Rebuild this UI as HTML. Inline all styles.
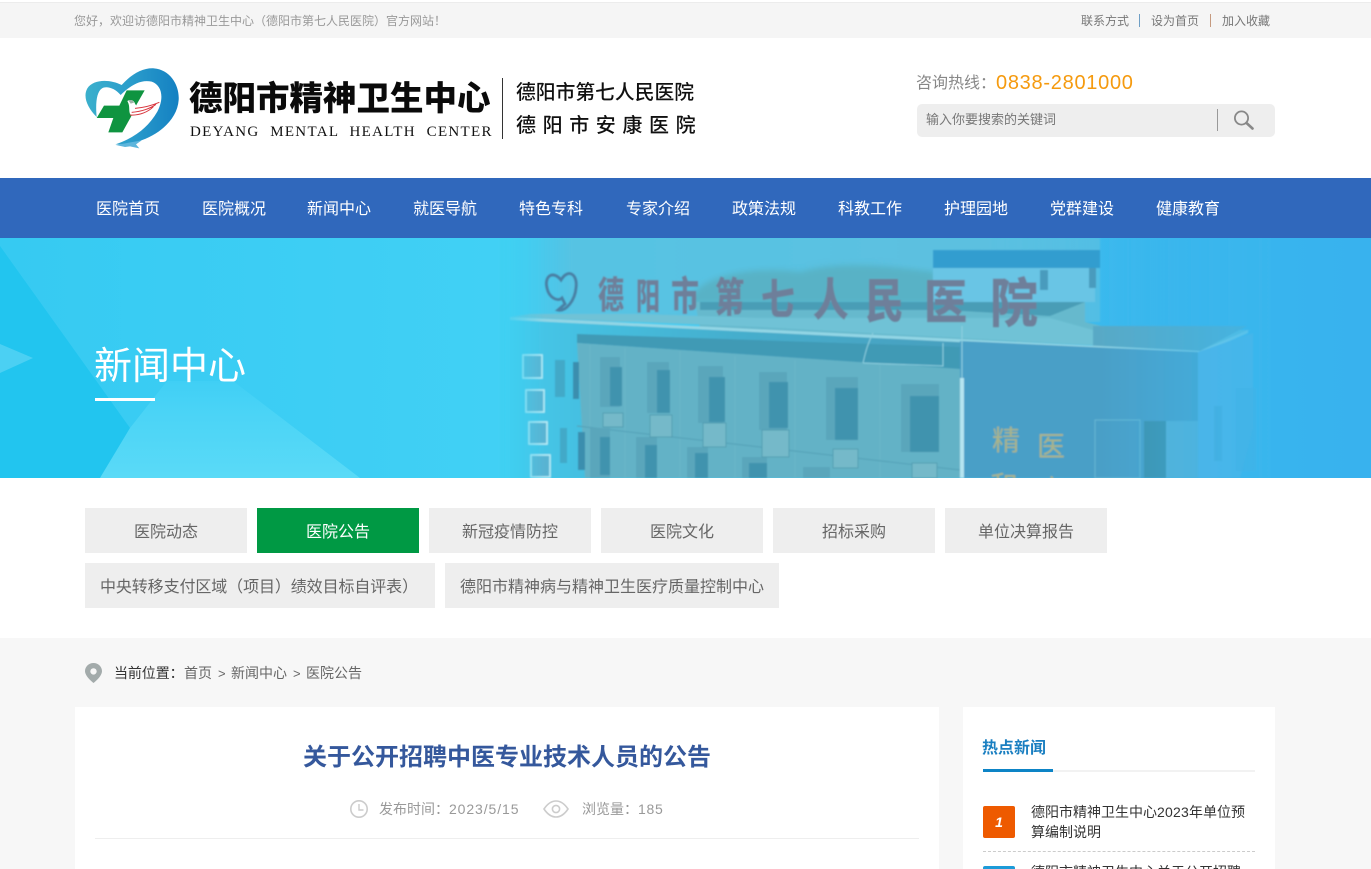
<!DOCTYPE html>
<html lang="zh-CN">
<head>
<meta charset="utf-8">
<title>关于公开招聘中医专业技术人员的公告</title>
<style>
*{margin:0;padding:0;box-sizing:border-box}
html,body{width:1371px;height:869px;overflow:hidden;background:#fff}
body{position:relative;font-family:"Liberation Sans","Noto Sans CJK SC",sans-serif;color:#333}
.a{position:absolute;white-space:nowrap}
.nav{top:180px;height:60px;line-height:60px;color:#fff;font-size:16px}
.tab{height:45px;line-height:49px;background:#eee;color:#666;font-size:16px;text-align:center}
</style>
</head>
<body>
<!-- top bar -->
<div class="a" style="left:0;top:2px;width:1371px;height:36px;background:#f5f5f5;border-top:1px solid #ececec"></div>
<div class="a" style="left:74px;top:12px;font-size:12px;line-height:18px;color:#999">您好，欢迎访德阳市精神卫生中心（德阳市第七人民医院）官方网站！</div>
<div class="a" style="left:1081px;top:12px;font-size:12px;line-height:18px;color:#777">联系方式</div>
<div class="a" style="left:1139px;top:14px;width:1px;height:13px;background:#6f9fc5"></div>
<div class="a" style="left:1151px;top:12px;font-size:12px;line-height:18px;color:#777">设为首页</div>
<div class="a" style="left:1210px;top:14px;width:1px;height:13px;background:#c59a7f"></div>
<div class="a" style="left:1222px;top:12px;font-size:12px;line-height:18px;color:#777">加入收藏</div>

<!-- logo -->
<svg class="a" style="left:80px;top:65px" width="100" height="85" viewBox="0 0 300 255">
<defs><linearGradient id="h" x1="0" y1="0" x2="1" y2="0"><stop offset="0" stop-color="#3bb0cc"/><stop offset=".5" stop-color="#2a9ccb"/><stop offset="1" stop-color="#1480c2"/></linearGradient></defs>
<path fill="url(#h)" d="M50 156C22 128 8 95 22 70C40 42 90 42 125 60C155 26 190 8 222 10C270 14 299 60 296 105C292 162 240 209 175 229C150 236 125 239 106 238C156 222 204 190 232 140C252 102 248 62 215 50C182 42 150 62 122 90C104 68 78 62 66 70C50 80 46 114 50 156Z"/>
<path fill="#5db5dc" d="M108 240L185 226L168 238L178 250L150 244L135 246Z"/>
<path fill="#0f9440" d="M140 76H194L170 118L152 157L127 202H85L100 159H50L72 122H118Z"/>
<path fill="#fff" d="M142 108C150 102 162 105 165 116C170 126 178 128 190 130C180 146 164 154 152 150C144 138 152 125 142 108Z"/>
<path fill="#9fb3a8" d="M145 106C152 103 160 106 162 113L152 116Z"/>
<path fill="none" stroke="#d8343c" stroke-width="3" d="M165 130C190 128 215 122 238 112M155 142C185 140 212 130 228 118M150 150C180 152 205 140 220 125"/>
</svg>
<div class="a" style="left:189px;top:76px;font-size:33.5px;line-height:48px;font-weight:900;color:#0a0a0a">德阳市精神卫生中心</div>
<div class="a" style="left:190px;top:123px;font-family:'Liberation Serif',serif;font-size:15px;line-height:18px;color:#111;letter-spacing:1.3px;word-spacing:5.7px">DEYANG MENTAL HEALTH CENTER</div>
<div class="a" style="left:502px;top:78px;width:1px;height:61px;background:#333"></div>
<div class="a" style="left:516px;top:79px;font-size:19.8px;line-height:28px;font-weight:500;color:#111">德阳市第七人民医院</div>
<div class="a" style="left:516px;top:112px;font-size:20px;line-height:28px;font-weight:500;color:#111;letter-spacing:6.6px">德阳市安康医院</div>

<!-- hotline + search -->
<div class="a" style="left:916px;top:72px;font-size:16px;line-height:24px;color:#888">咨询热线：</div>
<div class="a" style="left:996px;top:69px;font-size:20px;line-height:28px;color:#f59a0e;letter-spacing:.72px">0838-2801000</div>
<div class="a" style="left:917px;top:104px;width:358px;height:33px;background:#eee;border-radius:5px"></div>
<div class="a" style="left:926px;top:110px;font-size:13px;line-height:19px;color:#777">输入你要搜索的关键词</div>
<div class="a" style="left:1217px;top:109px;width:1px;height:22px;background:#999"></div>
<svg class="a" style="left:1232px;top:109px" width="24" height="22" viewBox="0 0 24 22"><circle cx="9.5" cy="9" r="6.6" fill="none" stroke="#888" stroke-width="1.8"/><path d="M14.5 14L20.5 19.5" stroke="#888" stroke-width="2.6" stroke-linecap="round"/></svg>

<!-- nav -->
<div class="a" style="left:0;top:178px;width:1371px;height:60px;background:#3068bc"></div>
<div class="a nav" style="left:96px">医院首页</div>
<div class="a nav" style="left:202px">医院概况</div>
<div class="a nav" style="left:307px">新闻中心</div>
<div class="a nav" style="left:413px">就医导航</div>
<div class="a nav" style="left:519px">特色专科</div>
<div class="a nav" style="left:626px">专家介绍</div>
<div class="a nav" style="left:732px">政策法规</div>
<div class="a nav" style="left:838px">科教工作</div>
<div class="a nav" style="left:944px">护理园地</div>
<div class="a nav" style="left:1050px">党群建设</div>
<div class="a nav" style="left:1156px">健康教育</div>

<!-- banner -->
<svg class="a" style="left:0;top:238px" width="1371" height="240" viewBox="0 0 1371 240">
<defs>
<linearGradient id="bg" x1="0" y1="0" x2="1" y2="0"><stop offset="0" stop-color="#36caf2"/><stop offset=".36" stop-color="#41d0f5"/><stop offset=".62" stop-color="#42c6ef"/><stop offset=".85" stop-color="#39b6ed"/><stop offset="1" stop-color="#38b2ee"/></linearGradient>
<linearGradient id="lt" x1="0" y1="0" x2="0" y2="1"><stop offset="0" stop-color="#40cff5"/><stop offset=".35" stop-color="#4bd4f6"/><stop offset="1" stop-color="#5adaf7"/></linearGradient>
<linearGradient id="sky" x1="0" y1="0" x2="1" y2="0"><stop offset="0" stop-color="#44c6ea" stop-opacity="0"/><stop offset=".12" stop-color="#56c3e3"/><stop offset=".8" stop-color="#5cc0e0"/><stop offset="1" stop-color="#5cc0e0" stop-opacity=".7"/></linearGradient>
<linearGradient id="lf" x1="0" y1="0" x2="1" y2="0"><stop offset="0" stop-color="#43c8ea"/><stop offset=".5" stop-color="#45aecd"/><stop offset="1" stop-color="#479fbe"/></linearGradient>
<linearGradient id="fl" x1="0" y1="0" x2="1" y2="0"><stop offset="0" stop-color="#3fd0f2"/><stop offset="1" stop-color="#3fd0f2" stop-opacity="0"/></linearGradient>
<linearGradient id="fr" x1="0" y1="0" x2="1" y2="0"><stop offset="0" stop-color="#3ab7ed" stop-opacity="0"/><stop offset=".8" stop-color="#3ab7ed" stop-opacity=".9"/><stop offset="1" stop-color="#3ab7ed"/></linearGradient>
<filter id="b" x="-2%" y="-2%" width="104%" height="104%"><feGaussianBlur stdDeviation=".7"/></filter>
<filter id="b2" x="-5%" y="-20%" width="110%" height="140%"><feGaussianBlur stdDeviation="3"/></filter>
</defs>
<rect width="1371" height="240" fill="url(#bg)"/>
<path d="M0 8L130 190L100 240H0Z" fill="#22c5ef"/>
<path d="M0 106L33 120L0 135Z" fill="#4bd0f3"/>
<path d="M130 190L167 143H233L360 240H100Z" fill="url(#lt)"/>
<g filter="url(#b)">
<!-- sky & distant -->
<rect x="500" y="0" width="600" height="84" fill="url(#sky)"/>
<path d="M690 62C700 35 760 28 800 34C840 22 890 28 935 34V66H690Z" fill="#58b2c6" filter="url(#b2)"/>
<rect x="933" y="30" width="162" height="34" fill="#69c5e5"/>
<rect x="933" y="12" width="167" height="18" fill="#309dcf"/>
<rect x="1040" y="32" width="8" height="20" fill="#4a9bbd"/>
<rect x="1089" y="30" width="7" height="20" fill="#4a9bbd"/>
<!-- roof deck -->
<path d="M695 64H1085V84L1200 112L700 90Z" fill="#66b9cd"/>
<path d="M700 64H1085L1050 78L945 72H700Z" fill="#489db6"/>
<path d="M510 79L760 89L1200 113L1250 92H1093L1050 80H760L640 76L530 76Z" fill="#6fc2d6"/>
<path d="M1093 88H1247L1200 113L1093 108Z" fill="#58a9c6"/>
<!-- facades -->
<path d="M510 80L960 103V240H510Z" fill="url(#lf)"/>
<path d="M510 79L1200 113L1248 92V95L1200 116L510 82Z" fill="#93d6e5"/>
<path d="M577 96L960 109V131L577 105Z" fill="#3f9ab5"/>
<path d="M960 103L1198 114V240H960Z" fill="#4a9fc7"/>
<path d="M1198 114L1253 95V190L1240 240H1198Z" fill="#57b3e5"/>
<path d="M577 105L960 131V240H585Z" fill="#64b2c6"/>
<!-- tile lines -->
<g stroke="#7cc3d2" stroke-width=".5" opacity=".4"><path d="M590 107V240M625 110V240M680 113V240M735 118V240M795 122V240M880 126V240"/></g>
<path d="M577 188L960 232" stroke="#55a3b9" stroke-width="1.2" fill="none"/>
<!-- pipes -->
<rect x="960" y="140" width="4" height="100" fill="#b5e5f1"/>
<path d="M962 88V140M873 95C868 105 866 112 863 125M863 125L943 128V105" stroke="#8fd0e0" stroke-width="1" fill="none"/>
<!-- left dark strips -->
<g fill="#4397b6"><rect x="555" y="122" width="10" height="37" opacity=".6"/><rect x="573" y="124" width="6" height="37" fill="#3a8eae"/><rect x="560" y="190" width="7" height="35" opacity=".6"/><rect x="578" y="194" width="7" height="38" fill="#3a8eae"/></g>
<!-- framed windows -->
<g fill="#59b3d2" stroke="#b9edf7" stroke-width="1.6"><rect x="523" y="117" width="19" height="23"/><rect x="526" y="152" width="18" height="22"/><rect x="529" y="184" width="18" height="22"/><rect x="531" y="217" width="19" height="22"/></g>
<!-- window recesses -->
<g fill="#5aa6bb">
<rect x="600" y="119" width="20" height="50"/><rect x="647" y="124" width="22" height="51"/><rect x="698" y="128" width="25" height="57"/><rect x="759" y="134" width="28" height="58"/><rect x="826" y="139" width="32" height="63"/><rect x="901" y="146" width="38" height="68"/>
<rect x="590" y="190" width="20" height="50"/><rect x="636" y="199" width="21" height="41"/><rect x="687" y="209" width="21" height="31"/><rect x="742" y="219" width="25" height="21"/><rect x="803" y="229" width="27" height="11"/>
</g>
<!-- panes -->
<g fill="#3f93ae">
<rect x="610" y="129" width="12" height="39"/><rect x="657" y="132" width="13" height="43"/><rect x="709" y="139" width="16" height="45"/><rect x="769" y="144" width="19" height="46"/><rect x="835" y="150" width="23" height="52"/><rect x="910" y="158" width="29" height="56"/>
<rect x="600" y="199" width="10" height="38"/><rect x="645" y="207" width="12" height="33"/><rect x="695" y="215" width="13" height="25"/><rect x="749" y="225" width="18" height="15"/>
</g>
<!-- AC units -->
<g fill="#74b9c9" stroke="#4d99ad" stroke-width=".8"><rect x="603" y="175" width="20" height="14"/><rect x="650" y="177" width="22" height="22"/><rect x="703" y="185" width="23" height="24"/><rect x="762" y="192" width="27" height="27"/><rect x="833" y="211" width="25" height="19"/><rect x="912" y="225" width="25" height="15"/></g>
<!-- right side details -->
<rect x="1144" y="183" width="22" height="57" fill="#3f8fa9"/>
<path d="M1166 183H1198V240H1166Z" fill="#5bb0d4"/>
<path d="M1095 182H1140V240H1095Z" fill="none" stroke="#66b7d4" stroke-width="1"/>
<rect x="1214" y="168" width="8" height="55" fill="#4ea8d6"/>
<rect x="1236" y="150" width="20" height="83" fill="#4ea8d8" opacity=".6"/>
<rect x="1100" y="0" width="170" height="240" fill="url(#fr)" opacity=".7"/>
<rect x="500" y="0" width="45" height="240" fill="url(#fl)"/>
<!-- sign -->
<path d="M561 42C553 32 544 38 547 50C549 60 558 64 562 60L565 66L558 72C566 74 575 62 576 50C578 36 568 30 561 42Z" fill="none" stroke="#4a80a4" stroke-width="3"/>
<g font-family="'Liberation Sans','Noto Sans CJK SC',sans-serif" font-weight="900" fill="#6e7f9a" font-size="40">
<text transform="translate(598,70) scale(.65,.92)">德</text>
<text transform="translate(636,71) scale(.6,.9)">阳</text>
<text transform="translate(671,72) scale(.7,1)">市</text>
<text transform="translate(715,74) scale(.73,1.03)">第</text>
<text transform="translate(761,76) scale(.84,1.05)">七</text>
<text transform="translate(813,78) scale(.89,1.13)">人</text>
<text transform="translate(865,80) scale(.97,1.19)">民</text>
<text transform="translate(924,81) scale(1.08,1.19)">医</text>
<text transform="translate(990,84) scale(1.2,1.32)">院</text>
</g>
<g font-family="'Liberation Sans','Noto Sans CJK SC',sans-serif" fill="#a9b48a" font-size="28"><text x="992" y="212">精</text><text x="1037" y="218">医</text><text x="990" y="258">和</text><text x="1037" y="262">康</text></g>
</g>
</svg>
<div class="a" style="left:94px;top:340px;font-size:38px;line-height:54px;color:#fff">新闻中心</div>
<div class="a" style="left:95px;top:398px;width:60px;height:3px;background:#fff"></div>

<!-- tabs -->
<div class="a tab" style="left:85px;top:508px;width:162px">医院动态</div>
<div class="a tab" style="left:257px;top:508px;width:162px;background:#009944;color:#fff">医院公告</div>
<div class="a tab" style="left:429px;top:508px;width:162px">新冠疫情防控</div>
<div class="a tab" style="left:601px;top:508px;width:162px">医院文化</div>
<div class="a tab" style="left:773px;top:508px;width:162px">招标采购</div>
<div class="a tab" style="left:945px;top:508px;width:162px">单位决算报告</div>
<div class="a tab" style="left:85px;top:563px;width:350px;padding-right:2px;letter-spacing:-.1px">中央转移支付区域（项目）绩效目标自评表）</div>
<div class="a tab" style="left:445px;top:563px;width:334px">德阳市精神病与精神卫生医疗质量控制中心</div>

<!-- lower section -->
<div class="a" style="left:0;top:638px;width:1371px;height:231px;background:#f7f7f7"></div>
<svg class="a" style="left:85px;top:663px" width="17" height="20" viewBox="0 0 17 20"><path fill-rule="evenodd" fill="#a3abab" d="M8.5 0C3.8 0 0 3.6 0 8.2C0 12.5 5.5 17.5 8.5 20C11.5 17.5 17 12.5 17 8.2C17 3.6 13.2 0 8.5 0ZM8.5 5.2A3.2 3.2 0 1 1 8.5 11.6A3.2 3.2 0 1 1 8.5 5.2Z"/></svg>
<div class="a" style="left:114px;top:664px;font-size:14px;line-height:19px;color:#333;letter-spacing:-.1px">当前位置：</div>
<div class="a" style="left:184px;top:664px;font-size:14px;line-height:19px;color:#666">首页</div>
<div class="a" style="left:218px;top:664px;font-size:13px;line-height:19px;color:#666">&gt;</div>
<div class="a" style="left:231px;top:664px;font-size:14px;line-height:19px;color:#666">新闻中心</div>
<div class="a" style="left:293px;top:664px;font-size:13px;line-height:19px;color:#666">&gt;</div>
<div class="a" style="left:306px;top:664px;font-size:14px;line-height:19px;color:#666">医院公告</div>

<!-- main card -->
<div class="a" style="left:75px;top:707px;width:864px;height:162px;background:#fff"></div>
<div class="a" style="left:75px;top:740px;width:864px;text-align:center;font-size:24px;line-height:36px;font-weight:700;color:#35589c">关于公开招聘中医专业技术人员的公告</div>
<svg class="a" style="left:349px;top:799px" width="20" height="20" viewBox="0 0 20 20"><circle cx="10" cy="10" r="8.2" fill="none" stroke="#ccc" stroke-width="1.6"/><path d="M10 5V11H14.5" fill="none" stroke="#ccc" stroke-width="1.4"/></svg>
<div class="a" style="left:379px;top:799px;font-size:14px;line-height:20px;color:#999">发布时间：<span style="letter-spacing:.9px">2023/5/15</span></div>
<svg class="a" style="left:543px;top:799px" width="26" height="20" viewBox="0 0 26 20"><path d="M1 10C5 4 9 2 13 2C17 2 21 4 25 10C21 16 17 18 13 18C9 18 5 16 1 10Z" fill="none" stroke="#ccc" stroke-width="1.6"/><circle cx="13" cy="10" r="3.6" fill="none" stroke="#ccc" stroke-width="1.6"/></svg>
<div class="a" style="left:582px;top:799px;font-size:14px;line-height:20px;color:#999">浏览量：<span style="letter-spacing:.7px">185</span></div>
<div class="a" style="left:95px;top:838px;width:824px;height:1px;background:#eee"></div>

<!-- side card -->
<div class="a" style="left:963px;top:707px;width:312px;height:162px;background:#fff"></div>
<div class="a" style="left:982px;top:737px;font-size:16px;line-height:24px;font-weight:700;color:#1a7fc1">热点新闻</div>
<div class="a" style="left:983px;top:770px;width:272px;height:2px;background:#f2f2f2"></div>
<div class="a" style="left:983px;top:769px;width:70px;height:3px;background:#0d84c6"></div>
<div class="a" style="left:983px;top:806px;width:32px;height:32px;background:#ee5a00;border-radius:2px;color:#fff;text-align:center;font-size:14px;line-height:32px;font-weight:700;font-style:italic">1</div>
<div class="a" style="left:1031px;top:802px;width:224px;font-size:14px;line-height:20px;color:#333;white-space:normal">德阳市精神卫生中心<span style="letter-spacing:.2px">2023</span>年单位预算编制说明</div>
<div class="a" style="left:983px;top:851px;width:272px;height:0;border-top:1px dashed #ccc"></div>
<div class="a" style="left:983px;top:866px;width:32px;height:32px;background:#1d9bd8;border-radius:2px"></div>
<div class="a" style="left:1031px;top:862px;font-size:14px;line-height:20px;color:#333">德阳市精神卫生中心关于公开招聘</div>
</body>
</html>
